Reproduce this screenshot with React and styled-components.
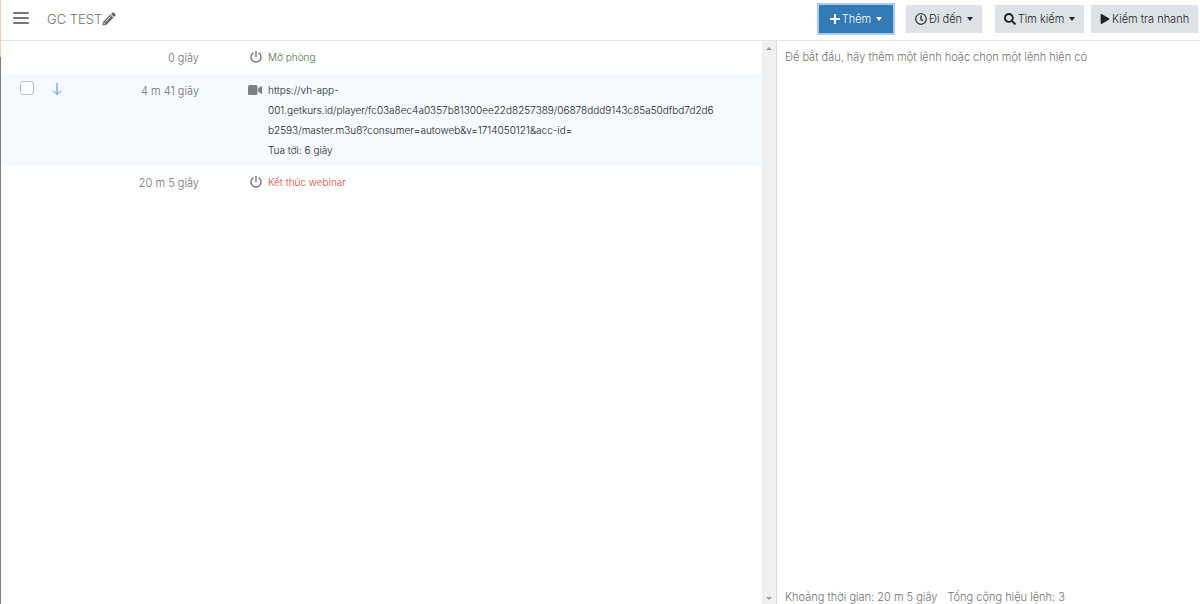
import React, { useState } from 'react';
import styled, { createGlobalStyle } from 'styled-components';
import { FaPlay, FaSearch, FaRegClock } from 'react-icons/fa';

const GlobalStyle = createGlobalStyle`
  * {
    box-sizing: border-box;
  }

  body {
    margin: 0;
    background: #fff;
    color: #707070;
    font-family: Inter, Roboto, sans-serif;
    font-size: 11px;
    font-weight: 300;
  }

  button,
  input {
    font: inherit;
    margin: 0;
  }
`;

const Page = styled.div`
  display: flex;
  flex-direction: column;
  height: 100vh;
  padding-left: 1px;
  background: linear-gradient(#f2cdb4 57px, #74808f 57px) left / 1px 100% no-repeat;
`;

const Header = styled.header`
  display: flex;
  align-items: center;
  height: 41px;
  padding: 0 2px 2px 12px;
  border-bottom: 1px solid #e4e5ea;
`;

const MenuButton = styled.button`
  display: flex;
  padding: 0;
  border: 0;
  background: none;
  color: #777;
`;

const Title = styled.h1`
  display: flex;
  align-items: center;
  flex: 1;
  margin: 0 0 0 18px;
  font-size: 13px;
  font-weight: 300;
`;

const EditButton = styled(MenuButton)`
  color: #666;
`;

const Actions = styled.div`
  display: flex;
  align-items: center;
`;

const Button = styled.button`
  display: flex;
  align-items: center;
  justify-content: center;
  gap: 2px;
  width: ${props => props.$width}px;
  height: 28px;
  margin-left: ${props => props.$gap || 0}px;
  padding: 0;
  border: 0;
  background: ${props => (props.$primary ? '#337ab7' : '#dee2e6')};
  box-shadow: ${props => (props.$primary ? '0 0 0 2px #a9cbee' : 'none')};
  color: ${props => (props.$primary ? '#fff' : '#212529')};
  white-space: nowrap;
`;

const Caret = styled.span`
  margin-left: 3px;
  border: 3px solid transparent;
  border-top: 4px solid currentColor;
  border-bottom: 0;
`;

const Main = styled.main`
  display: flex;
  flex: 1;
  min-height: 0;
`;

const Timeline = styled.section`
  flex: 1;
  min-width: 0;
`;

const Row = styled.div`
  display: grid;
  grid-template-columns: 46px 60px 92px 63px 1fr;
  align-items: start;
  padding: 6px 46px 6px 0;
  background: ${props => (props.$active ? '#f4fafd' : 'transparent')};
`;

const Check = styled.input`
  display: block;
  appearance: none;
  width: 14px;
  height: 14px;
  margin: 1px 0 0 19px;
  border: 1px solid #b9c0c5;
  border-radius: 3px;
  background: #fff;

  &:checked {
    background: #337ab7;
  }
`;

const ArrowCell = styled.div`
  display: flex;
  padding: 3px 0 0 4px;
  color: #428bca;
`;

const Time = styled.div`
  padding-top: 1px;
  line-height: 20px;
  text-align: right;
  white-space: nowrap;
`;

const IconCell = styled.div`
  display: flex;
  justify-content: flex-end;
  align-items: center;
  height: 20px;
`;

const Content = styled.div`
  padding-left: 6px;
  color: ${props => props.$color || '#222'};
  font-size: 10px;
  line-height: 20px;
  overflow-wrap: anywhere;
`;

const Scroller = styled.div`
  display: flex;
  flex-direction: column;
  align-items: center;
  justify-content: space-between;
  width: 14px;
  padding: 6px 0 4px;
  background: #f0f0f0;
`;

const ScrollArrow = styled.span`
  border: 3px solid transparent;
  border-${props => (props.$up ? 'bottom' : 'top')}-color: #999;
  border-${props => (props.$up ? 'top' : 'bottom')}: 0;
`;

const Side = styled.aside`
  display: flex;
  flex-direction: column;
  justify-content: space-between;
  flex: 0 0 424px;
  padding: 6px 8px 0;
  border-left: 1px solid #dcdfe8;
  line-height: 20px;

  p {
    margin: 0;
  }
`;

const Summary = styled.div`
  display: flex;
  gap: 10px;
  line-height: 14px;
`;

const MenuIcon = () => (
  <svg width="16" height="14" viewBox="0 0 16 14" fill="none" stroke="currentColor" strokeWidth="2">
    <path d="M1 1h14M1 6h14M1 11h14" strokeLinecap="round" />
  </svg>
);

const PencilIcon = () => (
  <svg width="14" height="14" viewBox="0 0 14 14" fill="currentColor">
    <path d="M9 1.9l3.1 3.1 1.2-1.2a1.3 1.3 0 0 0 0-1.8L12 .7a1.3 1.3 0 0 0-1.8 0z" />
    <path fillRule="evenodd" d="M8.3 2.6l3.1 3.1-7.3 7.3L.4 13.6 1 9.9zM8.4 4.3L3.1 9.6l.5.5 5.3-5.3zM1.9 10.8l-.3 1.6 1.6-.3z" />
  </svg>
);

const PlusIcon = () => (
  <svg width="10" height="10" viewBox="0 0 10 10" fill="none" stroke="currentColor" strokeWidth="2">
    <path d="M5 .5v9M.5 5h9" strokeLinecap="round" />
  </svg>
);

const PowerIcon = () => (
  <svg width="12" height="12" viewBox="0 0 12 12" fill="none" stroke="#777" strokeWidth="1.4">
    <path d="M6 0v6M3.4 1.7a5 5 0 1 0 5.2 0" />
  </svg>
);

const CameraIcon = () => (
  <svg width="14" height="10" viewBox="0 0 14 10" fill="#808080">
    <rect width="9.5" height="10" rx="1.5" />
    <path d="M10.2 3.6L13 1.2q1-.5 1 .4v6.8q0 .9-1 .4l-2.8-2.4z" />
  </svg>
);

const ArrowIcon = () => (
  <svg width="12" height="12" viewBox="0 0 12 12" fill="none" stroke="currentColor">
    <path d="M6 0v11M2 7.5l4 4 4-4" />
  </svg>
);

const App = () => {
    const [checked, setChecked] = useState(false);

    return (
        <Page>
            <GlobalStyle />
            <Header>
                <MenuButton type="button" aria-label="Menu"><MenuIcon /></MenuButton>
                <Title>
                    GC TEST
                    <EditButton type="button" aria-label="Edit"><PencilIcon /></EditButton>
                </Title>
                <Actions>
                    <Button type="button" $primary $width={74}><PlusIcon />Thêm <Caret /></Button>
                    <Button type="button" $width={76} $gap={13}><FaRegClock size={12} />Đi đến <Caret /></Button>
                    <Button type="button" $width={89} $gap={13}><FaSearch size={12} />Tìm kiếm <Caret /></Button>
                    <Button type="button" $width={107} $gap={7}><FaPlay size={10} />Kiểm tra nhanh</Button>
                </Actions>
            </Header>
            <Main>
                <Timeline>
                    <Row>
                        <span />
                        <span />
                        <Time>0 giây</Time>
                        <IconCell><PowerIcon /></IconCell>
                        <Content $color="#4b7043">Mở phòng</Content>
                    </Row>
                    <Row $active>
                        <Check
                            type="checkbox"
                            aria-label="4 m 41 giây"
                            checked={checked}
                            onChange={e => setChecked(e.target.checked)}
                        />
                        <ArrowCell><ArrowIcon /></ArrowCell>
                        <Time>4 m 41 giây</Time>
                        <IconCell><CameraIcon /></IconCell>
                        <Content>
                            <div>https://vh-app-<wbr />001.getkurs.id/player/fc03a8ec4a0357b81300ee22d8257389/06878ddd9143c85a50dfbd7d2d6b2593/master.m3u8?consumer=autoweb&amp;v=1714050121&amp;acc-id=</div>
                            <div>Tua tới: 6 giây</div>
                        </Content>
                    </Row>
                    <Row>
                        <span />
                        <span />
                        <Time>20 m 5 giây</Time>
                        <IconCell><PowerIcon /></IconCell>
                        <Content $color="#d9403b">Kết thúc webinar</Content>
                    </Row>
                </Timeline>
                <Scroller>
                    <ScrollArrow $up />
                    <ScrollArrow />
                </Scroller>
                <Side>
                    <p>Để bắt đầu, hãy thêm một lệnh hoặc chọn một lệnh hiện có</p>
                    <Summary>
                        <span>Khoảng thời gian: 20 m 5 giây</span>
                        <span>Tổng cộng hiệu lệnh: 3</span>
                    </Summary>
                </Side>
            </Main>
        </Page>
    );
};

export default App;
